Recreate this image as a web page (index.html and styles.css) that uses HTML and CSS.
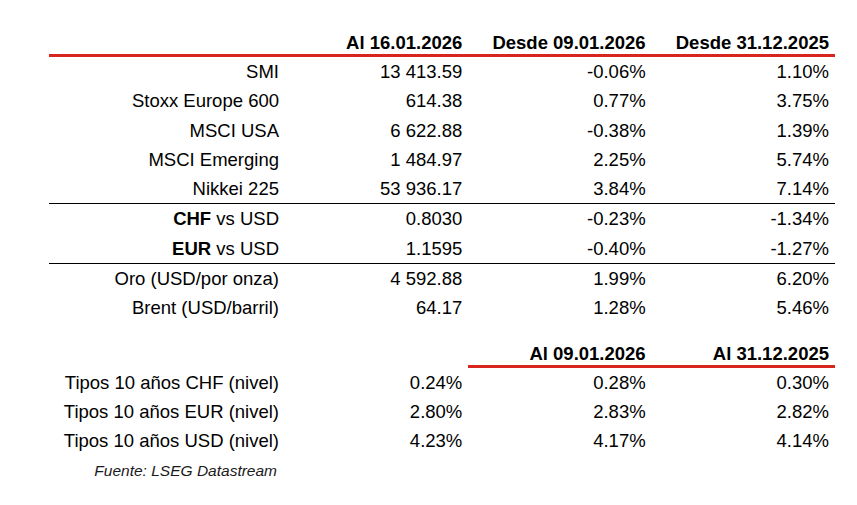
FILE: index.html
```html
<!DOCTYPE html>
<html lang="es">
<head>
<meta charset="utf-8">
<title>Mercados</title>
<link rel="stylesheet" href="styles.css">
</head>
<body>
<div class="page">
  <table class="grid">
    <colgroup>
      <col class="c-label"><col class="c-num"><col class="c-num"><col class="c-num">
    </colgroup>
    <thead>
      <tr class="head">
        <th class="rule"></th>
        <th class="rule">Al 16.01.2026</th>
        <th class="rule">Desde 09.01.2026</th>
        <th class="rule">Desde 31.12.2025</th>
      </tr>
    </thead>
    <tbody>
      <tr><td>SMI</td><td>13 413.59</td><td>-0.06%</td><td>1.10%</td></tr>
      <tr><td>Stoxx Europe 600</td><td>614.38</td><td>0.77%</td><td>3.75%</td></tr>
      <tr><td>MSCI USA</td><td>6 622.88</td><td>-0.38%</td><td>1.39%</td></tr>
      <tr><td>MSCI Emerging</td><td>1 484.97</td><td>2.25%</td><td>5.74%</td></tr>
      <tr class="sep"><td>Nikkei 225</td><td>53 936.17</td><td>3.84%</td><td>7.14%</td></tr>
      <tr><td><b>CHF</b> vs USD</td><td>0.8030</td><td>-0.23%</td><td>-1.34%</td></tr>
      <tr class="sep"><td><b>EUR</b> vs USD</td><td>1.1595</td><td>-0.40%</td><td>-1.27%</td></tr>
      <tr><td>Oro (USD/por onza)</td><td>4 592.88</td><td>1.99%</td><td>6.20%</td></tr>
      <tr><td>Brent (USD/barril)</td><td>64.17</td><td>1.28%</td><td>5.46%</td></tr>
    </tbody>
  </table>

  <table class="grid rates">
    <colgroup>
      <col class="c-label"><col class="c-num"><col class="c-num"><col class="c-num">
    </colgroup>
    <thead>
      <tr class="head">
        <th class="blank"></th>
        <th class="blank"></th>
        <th class="rule">Al 09.01.2026</th>
        <th class="rule">Al 31.12.2025</th>
      </tr>
    </thead>
    <tbody>
      <tr><td>Tipos 10 años CHF (nivel)</td><td>0.24%</td><td>0.28%</td><td>0.30%</td></tr>
      <tr><td>Tipos 10 años EUR (nivel)</td><td>2.80%</td><td>2.83%</td><td>2.82%</td></tr>
      <tr><td>Tipos 10 años USD (nivel)</td><td>4.23%</td><td>4.17%</td><td>4.14%</td></tr>
      <tr class="source"><td>Fuente: LSEG Datastream</td><td></td><td></td><td></td></tr>
    </tbody>
  </table>
</div>
</body>
</html>
```

FILE: styles.css
```css
html, body {
  margin: 0;
  padding: 0;
  background: #ffffff;
}

.page {
  padding: 32px 0 0 49px;
  font-family: "Liberation Sans", Arial, sans-serif;
  font-size: 18.5px;
  color: #000000;
}

.grid {
  table-layout: fixed;
  width: 786px;
  border-collapse: separate;
  border-spacing: 0;
}

.c-label { width: 236px; }
.c-num { width: 183.33px; }

.grid th,
.grid td {
  padding: 0 6px 0 0;
  text-align: right;
  white-space: nowrap;
  vertical-align: top;
}

.grid th {
  font-weight: bold;
  line-height: 22px;
  height: 22px;
}

.grid th.rule {
  border-bottom: 3px solid #d7261e;
}

.grid th.blank {
  border-bottom: 3px solid transparent;
}

.grid td {
  line-height: 29.3px;
  height: 29.3px;
}

.grid tr.sep td {
  border-bottom: 1px solid #000000;
}

.grid b {
  font-weight: bold;
}

.rates {
  margin-top: 20px;
}

.grid tr.source td {
  font-style: italic;
  font-size: 15.5px;
  line-height: 29.8px;
  height: 29.8px;
  padding-right: 8px;
  color: #1a1a1a;
}
```
